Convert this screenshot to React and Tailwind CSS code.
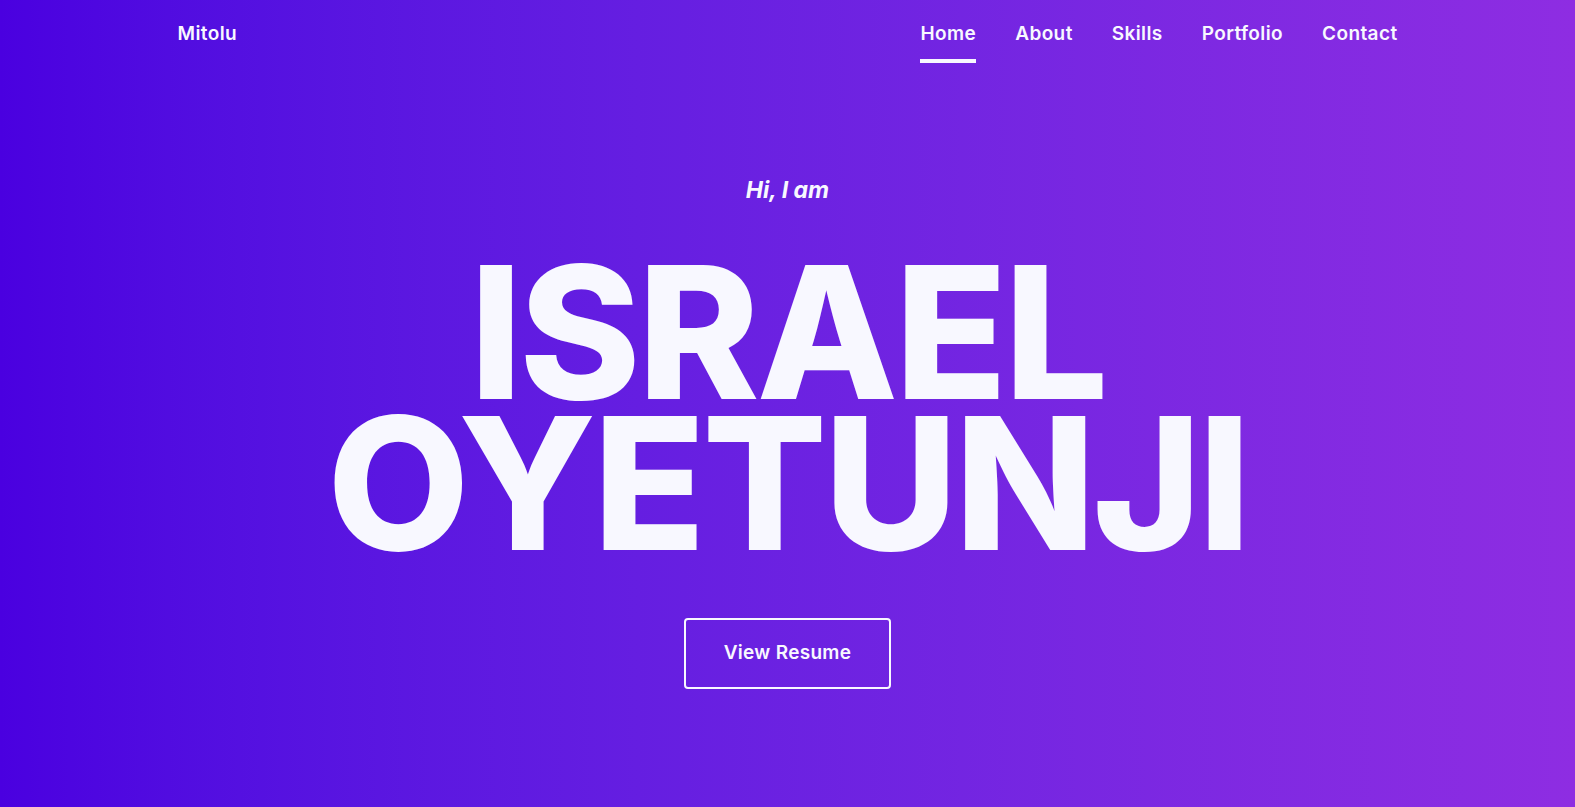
import React from 'react'

const links = ['Home', 'About', 'Skills', 'Portfolio', 'Contact']

const App = () => {
  return (
    <div
      className="min-h-screen w-full bg-gradient-to-r from-[#4a00e0] to-[#8e2de2] text-[#f8f8ff] overflow-hidden"
      style={{ fontFamily: 'Inter, "Noto Sans", sans-serif' }}
    >
      {/* Navbar */}
      <nav className="max-w-[1220px] mx-auto flex items-start justify-between pt-[22px]">
        <a className="text-[19px] leading-6 font-semibold tracking-[0.4px]">Mitolu</a>
        <ul className="flex gap-[39px]">
          {links.map((link, i) => (
            <li key={link}>
              <a
                className={
                  'block text-[19px] leading-6 font-semibold tracking-[0.4px] pb-[13px] border-b-[4px] ' +
                  (i === 0 ? 'border-[#f8f8ff]' : 'border-transparent')
                }
              >
                {link}
              </a>
            </li>
          ))}
        </ul>
      </nav>

      {/* Hero */}
      <section className="flex flex-col items-center text-center pt-[113px]">
        <p className="text-[23px] leading-7 font-bold italic tracking-[0px]">Hi, I am</p>
        <h1 className="mt-[53px] text-[184px] leading-[151px] font-extrabold tracking-[-3px] uppercase">
          Israel
          <br />
          Oyetunji
        </h1>
        <button className="mt-[59px] w-[207px] h-[71px] border-2 border-[#f8f8ff] rounded-[4px] text-[19px] font-semibold tracking-[0.3px]">
          View Resume
        </button>
      </section>
    </div>
  )
}

export default App
